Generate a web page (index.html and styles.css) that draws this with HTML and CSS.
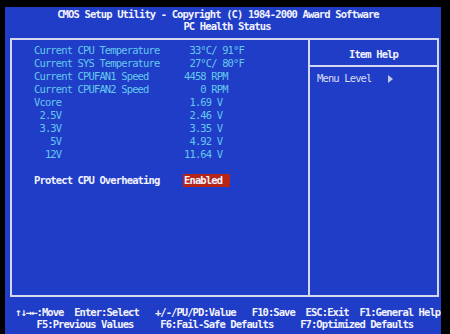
FILE: index.html
```html
<!DOCTYPE html>
<html>
<head>
<meta charset="utf-8">
<link rel="stylesheet" href="styles.css">
</head>
<body>
<div class="screen">
  <div class="title">
    <div class="line head-1">CMOS Setup Utility - Copyright (C) 1984-2000 Award Software</div>
    <div class="line head-2">PC Health Status</div>
  </div>
  <div class="frame">
    <div class="main">
      <div class="row"><span class="label">Current CPU Temperature</span><span class="value"> 33°C/ 91°F</span></div>
      <div class="row"><span class="label">Current SYS Temperature</span><span class="value"> 27°C/ 80°F</span></div>
      <div class="row"><span class="label">Current CPUFAN1 Speed</span><span class="value">4458 RPM</span></div>
      <div class="row"><span class="label">Current CPUFAN2 Speed</span><span class="value">   0 RPM</span></div>
      <div class="row"><span class="label">Vcore</span><span class="value"> 1.69 V</span></div>
      <div class="row"><span class="label"> 2.5V</span><span class="value"> 2.46 V</span></div>
      <div class="row"><span class="label"> 3.3V</span><span class="value"> 3.35 V</span></div>
      <div class="row"><span class="label">   5V</span><span class="value"> 4.92 V</span></div>
      <div class="row"><span class="label">  12V</span><span class="value">11.64 V</span></div>
      <div class="row setting"><span class="label">Protect CPU Overheating</span><span class="value sel">Enabled</span></div>
    </div>
    <div class="help">
      <div class="help-head">Item Help</div>
      <div class="help-body"><span class="line">Menu Level   </span><svg class="arrow" width="5" height="8" viewBox="0 0 5 8"><polygon points="0,0 5,4 0,8" fill="#c4c8e4"/></svg></div>
    </div>
  </div>
  <div class="footer">
    <div class="line">↑↓→←:Move  Enter:Select   +/-/PU/PD:Value   F10:Save  ESC:Exit  F1:General Help</div>
    <div class="line">    F5:Previous Values     F6:Fail-Safe Defaults     F7:Optimized Defaults</div>
  </div>
</div>
</body>
</html>
```
FILE: styles.css
```css
* { box-sizing: border-box; }
body {
  margin: 0;
  background: #000;
  width: 450px;
  height: 334px;
  overflow: hidden;
  font-family: "DejaVu Sans Mono", "Liberation Mono", monospace;
  font-size: 10.5px;
  letter-spacing: -0.87px;
}
.screen {
  margin: 7px 9px 0 5px;
  height: 327px;
  background: #1f3dc6;
  padding-top: 1px;
}
.line, .label, .value { white-space: pre; }
.title {
  color: #f2f2ff;
  font-weight: bold;
  text-align: center;
  line-height: 12px;
}
.head-1 { padding-right: 10px; }
.head-2 { padding-left: 8px; }
.frame {
  margin: 6px 2px 0 5px;
  height: 259px;
  border: 2px solid #d4d8f2;
  display: grid;
  grid-template-columns: 296px 1fr;
}
.main {
  padding: 4px 0 0 22px;
  color: #64c8f0;
  line-height: 13px;
}
.row { display: flex; }
.label { width: 150px; }
.setting {
  margin-top: 13px;
  color: #f2f2ff;
  font-weight: bold;
}
.sel {
  background: #b4251a;
  margin-left: -1px;
  padding: 0 8px 0 1px;
}
.help {
  border-left: 2px solid #d4d8f2;
}
.help-head {
  height: 27px;
  border-bottom: 2px solid #d4d8f2;
  padding-top: 3px;
  line-height: 22px;
  text-align: center;
  color: #f2f2ff;
  font-weight: bold;
}
.help-body {
  padding: 5px 0 0 7px;
  line-height: 13px;
  color: #d8dcf4;
}
.arrow { vertical-align: -1px; }
.footer {
  margin-top: 9px;
  padding-left: 10px;
  color: #f2f2ff;
  font-weight: bold;
  line-height: 12px;
  letter-spacing: -0.94px;
}
```
